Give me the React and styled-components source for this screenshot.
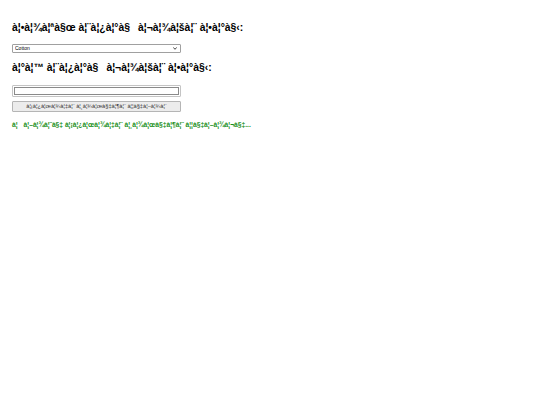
import React from "react";
import styled, { createGlobalStyle } from "styled-components";

// the page shows UTF-8 Bengali read back as windows-1252
const CP1252 = {
  0x80: "\u20AC", 0x82: "\u201A", 0x83: "\u0192", 0x84: "\u201E", 0x85: "\u2026",
  0x86: "\u2020", 0x87: "\u2021", 0x88: "\u02C6", 0x89: "\u2030", 0x8a: "\u0160",
  0x8b: "\u2039", 0x8c: "\u0152", 0x8e: "\u017D", 0x91: "\u2018", 0x92: "\u2019",
  0x93: "\u201C", 0x94: "\u201D", 0x95: "\u2022", 0x96: "\u2013", 0x97: "\u2014",
  0x98: "\u02DC", 0x99: "\u2122", 0x9a: "\u0161", 0x9b: "\u203A", 0x9c: "\u0153",
  0x9e: "\u017E", 0x9f: "\u0178",
};

const garble = (s) =>
  Array.from(new TextEncoder().encode(s))
    .map((b) => CP1252[b] || String.fromCharCode(b))
    .join("");

const GlobalStyle = createGlobalStyle`
  html, body {
    margin: 0;
    background: #fff;
  }
  body {
    font-family: "Liberation Sans", Arial, sans-serif;
    color: #000;
  }
`;

const Page = styled.div`
  padding: 12px;
  width: 260px;
`;

const Heading = styled.h2`
  margin: ${(p) => p.$top}px 0 0;
  font-size: 10.4px;
  font-weight: bold;
  line-height: 14px;
  white-space: pre;
`;

const SelectWrap = styled.div`
  position: relative;
  margin-top: 9px;
  width: 169px;
`;

const Select = styled.select`
  display: block;
  box-sizing: border-box;
  width: 100%;
  height: 9px;
  padding: 0 2px;
  border: 1px solid #a0a0a0;
  border-radius: 1px;
  background: #fff;
  appearance: none;
  font-family: "Liberation Sans", Arial, sans-serif;
  font-size: 5px;
  line-height: 7px;
  color: #000;
`;

const Chevron = styled.svg`
  position: absolute;
  right: 4px;
  top: 3px;
  width: 4px;
  height: 3px;
  pointer-events: none;
`;

const Field = styled.input`
  display: block;
  box-sizing: border-box;
  margin-top: 10px;
  width: 169px;
  height: 12px;
  border: 1px solid #c4c4c4;
  border-radius: 1px;
  box-shadow: inset 0 0 0 1px #fff, inset 0 0 0 2px #8a8a8a;
  background: #fff;
  padding: 0 3px;
  font-size: 6px;
  outline: none;
`;

const Button = styled.button`
  display: block;
  box-sizing: border-box;
  margin-top: 4px;
  width: 169px;
  height: 11px;
  padding: 0;
  border: 1px solid #b5b5b5;
  border-radius: 1px;
  background: #ececec;
  color: #333;
  font-family: "Liberation Sans", Arial, sans-serif;
  font-size: 5.7px;
  line-height: 9px;
  white-space: pre;
`;

const Status = styled.p`
  margin: 9px 0 0;
  color: #1a8f1a;
  font-size: 6.7px;
  font-weight: bold;
  line-height: 8px;
  white-space: pre;
`;

export default function App() {
  return (
    <>
      <GlobalStyle />
      <Page>
        <Heading $top={9}>{garble("কাপ\u09DC নির্বাচন করো:")}</Heading>
        <SelectWrap>
          <Select defaultValue="cotton">
            <option value="cotton">Cotton</option>
          </Select>
          <Chevron viewBox="0 0 4 3">
            <path d="M0.3 0.4 L2 2.3 L3.7 0.4" fill="none" stroke="#333" strokeWidth="0.9" />
          </Chevron>
        </SelectWrap>
        <Heading $top={8}>{garble("রঙ নির্বাচন করো:")}</Heading>
        <Field type="text" />
        <Button>{garble("ডিজাইন সাজেশন দেখান")}</Button>
        <Status>{garble("এখানে ডিজাইন সাজেশন দেখাবে...")}</Status>
      </Page>
    </>
  );
}
